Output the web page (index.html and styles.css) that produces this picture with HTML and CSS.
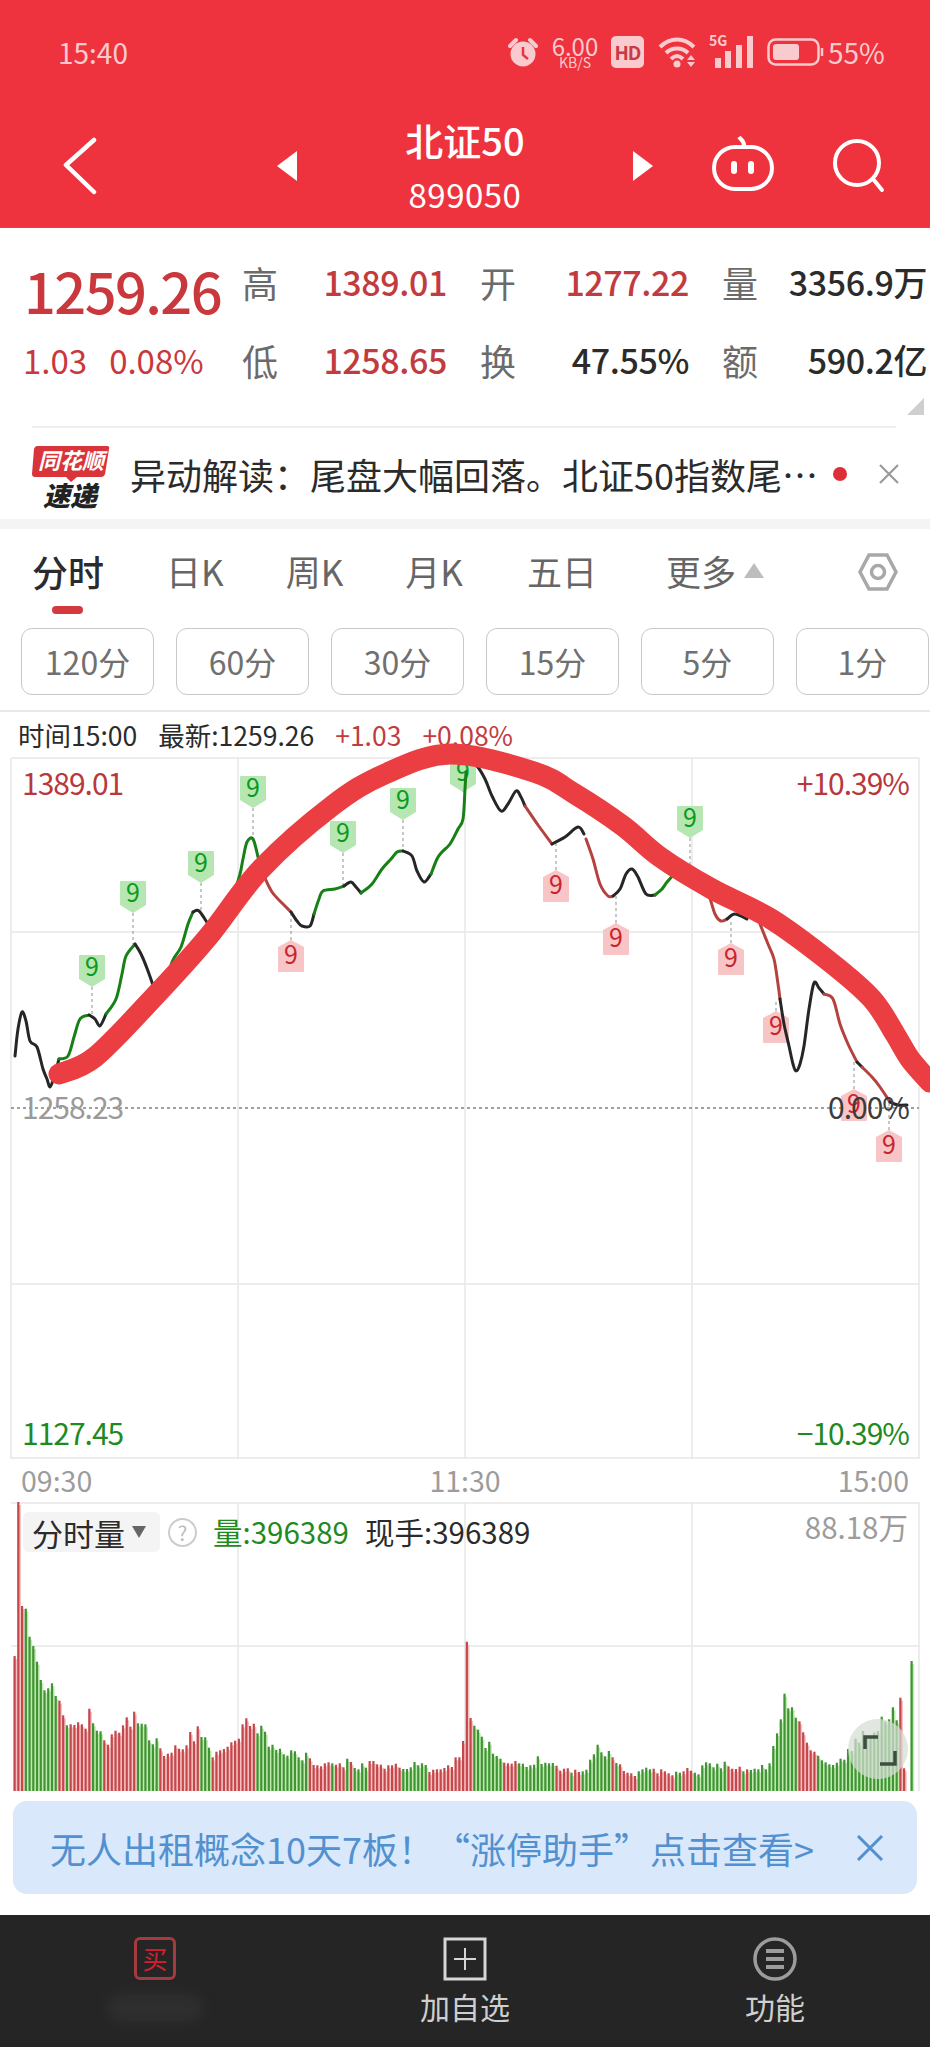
FILE: index.html
```html
<!DOCTYPE html>
<html lang="zh-CN">
<head>
  <meta charset="UTF-8">
  <meta name="viewport" content="width=device-width, initial-scale=1.0">
  <title>北证50</title>
  <link rel="stylesheet" href="styles.css">
</head>
<body>
  <header class="topbar">
    <div class="status">
      <span class="clock">15:40</span>
      <div class="status-icons">
        <svg class="ico-alarm" width="30" height="30" viewBox="0 0 30 30">
          <path d="M2 9 L8 3 M28 9 L22 3" class="alarm-ear"/>
          <circle cx="15" cy="17" r="12.5" class="alarm-face"/>
          <path d="M15 10 V18 L20 22" class="alarm-hand"/>
        </svg>
        <div class="speed"><span class="speed-num">6.00</span><span class="speed-unit">KB/S</span></div>
        <span class="hd">HD</span>
        <svg class="ico-wifi" width="40" height="32" viewBox="0 0 40 32">
          <path d="M2 11 C12 1 26 1 36 11 M8 17 C14 11 24 11 30 17 M13 23 C17 19 21 19 25 23" class="wifi-arc"/>
          <circle cx="19" cy="28" r="3.5" class="wifi-dot"/>
          <path d="M29 24 L33 19 L37 24 Z M29 26 L37 26 L33 31 Z" class="wifi-dot"/>
        </svg>
        <div class="signal">
          <span class="signal-5g">5G</span>
          <svg width="44" height="32" viewBox="0 0 44 32">
            <rect x="6" y="22" width="6" height="10"/>
            <rect x="16" y="15" width="6" height="17"/>
            <rect x="27" y="9" width="6" height="23"/>
            <rect x="38" y="0" width="6" height="32"/>
          </svg>
        </div>
        <svg class="ico-battery" width="57" height="28" viewBox="0 0 57 28">
          <rect x="1.5" y="1.5" width="50" height="25" rx="7" class="batt-shell"/>
          <rect x="6" y="6" width="26" height="16" rx="3" class="batt-fill"/>
          <path d="M55 10 V18" class="batt-shell"/>
        </svg>
        <span class="batt-pct">55%</span>
      </div>
    </div>
    <nav class="nav">
      <svg class="nav-back" width="38" height="58" viewBox="0 0 38 58"><path d="M33 3 L5 28 L33 55"/></svg>
      <span class="tri tri-left"></span>
      <div class="title">
        <div class="title-name">北证50</div>
        <div class="title-code">899050</div>
      </div>
      <span class="tri tri-right"></span>
      <svg class="nav-robot" width="64" height="56" viewBox="0 0 64 56">
        <path d="M28 1 C30 4 34 5 33 11" class="robot-line"/>
        <rect x="3" y="11" width="58" height="42" rx="21" class="robot-line"/>
        <rect x="20" y="25" width="6" height="13" rx="3" class="robot-eye"/>
        <rect x="37" y="25" width="6" height="13" rx="3" class="robot-eye"/>
      </svg>
      <svg class="nav-search" width="54" height="54" viewBox="0 0 54 54">
        <circle cx="25" cy="24" r="22"/>
        <path d="M41 40 L50 51"/>
      </svg>
    </nav>
  </header>

  <section class="quote">
    <div class="price">1259.26</div>
    <div class="cell"><span class="cell-label">高</span><span class="cell-val up">1389.01</span></div>
    <div class="cell"><span class="cell-label">开</span><span class="cell-val up">1277.22</span></div>
    <div class="cell"><span class="cell-label">量</span><span class="cell-val">3356.9万</span></div>
    <div class="change"><span>1.03</span><span>0.08%</span></div>
    <div class="cell"><span class="cell-label">低</span><span class="cell-val up">1258.65</span></div>
    <div class="cell"><span class="cell-label">换</span><span class="cell-val">47.55%</span></div>
    <div class="cell"><span class="cell-label">额</span><span class="cell-val">590.2亿</span></div>
    <span class="corner"></span>
  </section>

  <section class="news">
    <svg class="news-logo" width="78" height="72" viewBox="0 0 78 72">
      <path d="M5 1 H75 Q78 1 77 4 L73 29 Q72 32 69 32 H45 L39 37 L34 32 H3 Q0 32 0 29 L2 4 Q3 1 5 1 Z" class="logo-bubble"/>
      <text x="39" y="24" class="logo-top">同花顺</text>
      <text x="38" y="61" class="logo-bottom">速递</text>
    </svg>
    <div class="news-text">异动解读：尾盘大幅回落。北证50指数尾…</div>
    <span class="news-dot"></span>
    <svg class="news-close" width="22" height="22" viewBox="0 0 22 22"><path d="M2 2 L20 20 M20 2 L2 20"/></svg>
  </section>

  <div class="strip"></div>

  <div class="tabs">
    <span class="tab tab-on">分时</span>
    <span class="tab">日K</span>
    <span class="tab">周K</span>
    <span class="tab">月K</span>
    <span class="tab">五日</span>
    <span class="tab">更多<i class="tab-up"></i></span>
    <svg class="tab-gear" width="42" height="42" viewBox="0 0 42 42">
      <path d="M12 4 H30 L39 21 L30 38 H12 L3 21 Z"/>
      <circle cx="21" cy="21" r="6.5"/>
    </svg>
  </div>

  <div class="periods">
    <span class="period">120分</span>
    <span class="period">60分</span>
    <span class="period">30分</span>
    <span class="period">15分</span>
    <span class="period">5分</span>
    <span class="period">1分</span>
  </div>

  <div class="tick">
    <span>时间15:00</span>
    <span class="tick-gap">最新:1259.26</span>
    <span class="tick-gap up">+1.03</span>
    <span class="tick-gap up">+0.08%</span>
  </div>

  <svg class="chart" width="930" height="701" viewBox="0 759 930 701">
    <g class="grid">
      <path d="M11 759 H919 M11 933 H919 M11 1285 H919 M11 1459 H919"/>
      <path d="M11 759 V1460 M238 759 V1460 M465 759 V1460 M692 759 V1460 M919 759 V1460"/>
    </g>
    <path d="M11 1109 H919" class="base"/>
    <g id="tags"></g>
    <polyline class="ln ln-k" points="15,1057 18,1030 22,1013 26,1022 30,1042 37,1048 43,1070 47,1080 50,1088 54,1078 59,1060"/>
    <polyline class="ln ln-g" points="59,1060 68,1057 74,1038 80,1020 89,1016"/>
    <polyline class="ln ln-k" points="89,1016 95,1020 100,1027 106,1015"/>
    <polyline class="ln ln-g" points="106,1015 116,1000 122,975 126,957 135,945"/>
    <polyline class="ln ln-k" points="135,945 141,955 148,972 155,992"/>
    <polyline class="ln ln-g" points="165,990 172,963 181,948 188,925 193,913"/>
    <polyline class="ln ln-k" points="193,913 199,912 208,925"/>
    <polyline class="ln ln-g" points="225,905 234,893 240,875 243,860 247,843 253,840 258,858"/>
    <polyline class="ln ln-r" points="264,877 272,893 283,905 291,913"/>
    <polyline class="ln ln-k" points="291,913 297,922 302,927 310,927 314,915"/>
    <polyline class="ln ln-g" points="314,915 319,900 323,892 335,890 344,887"/>
    <polyline class="ln ln-k" points="344,887 351,883 356,888 361,894"/>
    <polyline class="ln ln-g" points="361,894 372,885 382,870 391,860 397,853 403,852"/>
    <polyline class="ln ln-k" points="403,852 412,857 417,872 424,883 431,875"/>
    <polyline class="ln ln-g" points="431,875 437,860 442,853 450,845 458,830 463,820 465,790 466,773"/>
    <polyline class="ln ln-k" points="470,762 477,767 485,780 492,797 501,812 508,805 516,792 521,798 525,807"/>
    <polyline class="ln ln-r" points="525,807 538,826 552,845"/>
    <polyline class="ln ln-k" points="552,845 565,838 578,828 584,835"/>
    <polyline class="ln ln-r" points="586,840 593,860 600,885 608,897 613,897"/>
    <polyline class="ln ln-k" points="613,897 620,890 626,875 632,870 638,878 646,895 655,896"/>
    <polyline class="ln ln-g" points="655,896 662,890 667,883 676,873"/>
    <polyline class="ln ln-r" points="691,872 700,882 709,897 715,915 721,922 727,920"/>
    <polyline class="ln ln-k" points="727,920 735,915 747,920"/>
    <polyline class="ln ln-r" points="760,925 768,945 774,960 778,985 780,1000"/>
    <polyline class="ln ln-k" points="780,1000 784,1025 789,1047 793,1065 796,1072 800,1065 804,1047 809,1010 814,984 819,989 824,995"/>
    <polyline class="ln ln-r" points="824,995 833,1000 840,1025 848,1045 857,1063"/>
    <polyline class="ln ln-k" points="857,1063 862,1068"/>
    <polyline class="ln ln-r" points="862,1068 872,1078 880,1088 890,1103"/>
    <polyline class="ln ln-k" points="890,1103 898,1106 907,1106"/>
    <text x="22" y="796" class="lbl lbl-up">1389.01</text>
    <text x="909" y="796" class="lbl lbl-end lbl-up">+10.39%</text>
    <text x="22" y="1120" class="lbl lbl-mid">1258.23</text>
    <text x="909" y="1120" class="lbl lbl-end lbl-dark">0.00%</text>
    <text x="22" y="1446" class="lbl down">1127.45</text>
    <text x="909" y="1446" class="lbl lbl-end down">−10.39%</text>
    <polyline class="marker" points="59,1075 95,1058 154,998 208,938 261,870 332,807 385,775 451,755 534,773 575,795 623,827 660,858 712,890 771,920 830,963 872,1000 895,1035 910,1060 930,1083"/>
  </svg>

  <div class="times">
    <span>09:30</span>
    <span>11:30</span>
    <span>15:00</span>
  </div>

  <div class="vol">
    <svg class="vol-chart" width="930" height="289" viewBox="0 1503 930 289">
      <g class="grid">
        <path d="M11 1504 H919 M11 1647 H919"/>
        <path d="M238 1503 V1792 M465 1503 V1792 M692 1503 V1792 M919 1503 V1792"/>
      </g>
      <g id="bars"></g>
      <circle cx="878" cy="1750" r="30" class="zoom-bg"/>
      <path d="M865 1750 V1738 H878 M880 1765 H895 V1752" class="zoom-ico"/>
    </svg>
    <div class="vol-head">
      <span class="vol-chip">分时量<i class="chip-down"></i></span>
      <span class="vol-help">?</span>
      <span class="vol-num down">量:396389</span>
      <span class="vol-num">现手:396389</span>
      <span class="vol-max">88.18万</span>
    </div>
  </div>

  <div class="banner">
    <span class="banner-text">无人出租概念10天7板！“涨停助手”点击查看&gt;</span>
    <svg class="banner-close" width="28" height="26" viewBox="0 0 28 26"><path d="M2 1 L26 25 M26 1 L2 25"/></svg>
  </div>

  <footer class="bottom">
    <div class="bottom-item">
      <span class="buy-ico">买</span>
      <span class="smudge"></span>
    </div>
    <div class="bottom-item">
      <svg width="44" height="44" viewBox="0 0 44 44" class="add-ico">
        <rect x="2" y="2" width="40" height="40"/>
        <path d="M22 11 V33 M11 22 H33"/>
      </svg>
      <span class="bottom-label">加自选</span>
    </div>
    <div class="bottom-item">
      <svg width="44" height="44" viewBox="0 0 44 44" class="fn-ico">
        <circle cx="22" cy="22" r="20"/>
        <path d="M13 14 H31 M13 22 H31 M13 30 H31"/>
      </svg>
      <span class="bottom-label">功能</span>
    </div>
  </footer>

  <script src="script.js"></script>
</body>
</html>
```

FILE: styles.css
```css
* {
  box-sizing: border-box;
}

body {
  margin: 0;
  width: 930px;
  height: 2048px;
  overflow: hidden;
  background-color: #ffffff;
  color: #2b2b2b;
  font-family: "Noto Sans CJK SC", "Noto Sans", sans-serif;
}

svg {
  display: block;
  flex: none;
}

.up {
  color: #c23b3f;
}

.down {
  color: #1f8a22;
  fill: #1f8a22;
}

/* red header */
.topbar {
  height: 228px;
  background-color: #ee333e;
  border-bottom: 1px solid #c4505c;
}

.status {
  height: 104px;
  display: flex;
  align-items: center;
  padding-left: 58px;
  color: #f9cbce;
}

.clock {
  font-size: 28px;
  line-height: 1;
}

.status-icons {
  display: flex;
  align-items: center;
  margin-left: 380px;
}

.alarm-ear {
  fill: none;
  stroke: #f9cbce;
  stroke-width: 4;
  stroke-linecap: round;
}

.alarm-face {
  fill: #f9cbce;
}

.alarm-hand {
  fill: none;
  stroke: #ee333e;
  stroke-width: 2.5;
}

.speed {
  display: flex;
  flex-direction: column;
  align-items: center;
  width: 50px;
  margin-left: 12px;
}

.speed-num {
  font-size: 24px;
  line-height: 21px;
}

.speed-unit {
  font-size: 14px;
  line-height: 13px;
}

.hd {
  width: 33px;
  height: 32px;
  margin-left: 11px;
  border-radius: 5px;
  background-color: #f9cbce;
  color: #c93a46;
  font-size: 19px;
  font-weight: 700;
  line-height: 32px;
  text-align: center;
  letter-spacing: -1px;
}

.ico-wifi {
  margin-left: 14px;
}

.wifi-arc {
  fill: none;
  stroke: #f9cbce;
  stroke-width: 4;
}

.wifi-dot {
  fill: #f9cbce;
}

.signal {
  position: relative;
  margin-left: 11px;
}

.signal svg {
  fill: #f9cbce;
}

.signal-5g {
  position: absolute;
  left: 0;
  top: -3px;
  font-size: 14px;
  font-weight: 700;
  line-height: 14px;
}

.ico-battery {
  margin-left: 14px;
}

.batt-shell {
  fill: none;
  stroke: #f9cbce;
  stroke-width: 2.5;
}

.batt-fill {
  fill: #f9cbce;
}

.batt-pct {
  margin-left: 4px;
  font-size: 28px;
  line-height: 1;
}

.nav {
  height: 123px;
  display: flex;
  align-items: center;
  padding-left: 61px;
}

.nav-back path {
  fill: none;
  stroke: #ffffff;
  stroke-width: 4.5;
  stroke-linecap: round;
  stroke-linejoin: round;
}

.tri {
  width: 0;
  height: 0;
  border-top: 15px solid transparent;
  border-bottom: 15px solid transparent;
}

.tri-left {
  margin-left: 178px;
  border-right: 20px solid #ffffff;
}

.tri-right {
  border-left: 20px solid #ffffff;
}

.title {
  width: 336px;
  margin-top: -3px;
  color: #ffffff;
  text-align: center;
}

.title-name {
  font-size: 38px;
  font-weight: 500;
  line-height: 44px;
}

.title-code {
  margin-top: 15px;
  font-size: 33px;
  line-height: 34px;
  letter-spacing: 0.5px;
}

.nav-robot {
  margin-left: 58px;
  margin-top: -4px;
}

.robot-line {
  fill: none;
  stroke: #ffffff;
  stroke-width: 4;
}

.robot-eye {
  fill: #ffffff;
}

.nav-search {
  margin-left: 57px;
}

.nav-search circle,
.nav-search path {
  fill: none;
  stroke: #ffffff;
  stroke-width: 4;
  stroke-linecap: round;
}

/* quote table */
.quote {
  position: relative;
  height: 198px;
  padding-top: 26px;
  display: grid;
  grid-template-columns: 209px 204px 208px 204px;
  grid-template-rows: 56px 56px;
  column-gap: 34px;
  row-gap: 22px;
}

.price {
  padding-left: 24px;
  margin-top: 8px;
  color: #c9383c;
  font-size: 56px;
  font-weight: 500;
  line-height: 56px;
  letter-spacing: -1.6px;
  white-space: nowrap;
}

.change {
  display: flex;
  gap: 22px;
  padding-left: 23px;
  color: #c9383c;
  font-size: 33px;
  line-height: 56px;
  white-space: nowrap;
}

.cell {
  display: flex;
  justify-content: space-between;
  margin-left: -1px;
  line-height: 56px;
}

.cell-label {
  color: #6b6b6b;
  font-size: 36px;
}

.cell-val {
  font-size: 34px;
  font-weight: 500;
  letter-spacing: -0.4px;
  white-space: nowrap;
}

.corner {
  position: absolute;
  right: 6px;
  top: 170px;
  width: 0;
  height: 0;
  border-bottom: 17px solid #cfcfcf;
  border-left: 17px solid transparent;
}

/* news row */
.news {
  position: relative;
  height: 93px;
  margin: 0 34px 0 32px;
  border-top: 2px solid #eeeeee;
  display: flex;
  align-items: center;
}

.news-logo {
  margin-top: 14px;
}

.logo-bubble {
  fill: #d8343a;
}

.logo-top {
  fill: #ffffff;
  font-size: 22px;
  font-weight: 700;
  font-style: italic;
  text-anchor: middle;
}

.logo-bottom {
  fill: #222222;
  font-size: 27px;
  font-weight: 900;
  font-style: italic;
  text-anchor: middle;
}

.news-text {
  flex: none;
  width: 690px;
  margin-left: 20px;
  font-size: 36px;
  white-space: nowrap;
}

.news-dot {
  flex: none;
  width: 14px;
  height: 14px;
  margin-left: 13px;
  border-radius: 50%;
  background-color: #dd2f38;
}

.news-close {
  margin-left: 31px;
  margin-right: -4px;
}

.news-close path {
  fill: none;
  stroke: #9a9a9a;
  stroke-width: 2.2;
}

.strip {
  height: 10px;
  background-color: #f4f4f4;
}

/* tabs */
.tabs {
  position: relative;
  height: 99px;
  padding: 0 0 16px 32px;
  display: flex;
  align-items: center;
  gap: 62px;
  color: #666666;
  font-size: 35px;
}

.tab {
  display: flex;
  align-items: center;
  line-height: 1;
  white-space: nowrap;
}

.tab:nth-child(5) {
  margin-left: 2px;
}

.tab:nth-child(6) {
  margin-left: 7px;
}

.tab-on {
  position: relative;
  color: #2b2b2b;
  font-size: 36px;
  font-weight: 500;
}

.tab-on::after {
  content: "";
  position: absolute;
  left: 20px;
  top: 53px;
  width: 31px;
  height: 8px;
  border-radius: 4px;
  background-color: #d23a3e;
}

.tab-up {
  margin-left: 8px;
  width: 0;
  height: 0;
  border-left: 10px solid transparent;
  border-right: 10px solid transparent;
  border-bottom: 15px solid #bdbdbd;
}

.tab-gear {
  position: absolute;
  left: 857px;
  top: 22px;
  fill: none;
  stroke: #a8a8a8;
  stroke-width: 3.5;
}

.periods {
  height: 84px;
  padding: 0 0 17px 21px;
  display: flex;
  gap: 22px;
  overflow: hidden;
  border-bottom: 2px solid #e8e8e8;
}

.period {
  flex: none;
  width: 133px;
  height: 67px;
  border: 1.5px solid #c8c8c8;
  border-radius: 11px;
  color: #707070;
  font-size: 32px;
  line-height: 64px;
  text-align: center;
}

.tick {
  height: 46px;
  padding-left: 18px;
  display: flex;
  align-items: center;
  font-size: 26.5px;
  line-height: 1;
  white-space: nowrap;
}

.tick-gap {
  margin-left: 21px;
}

/* charts */
.chart {
  position: relative;
  overflow: visible;
}

.grid path {
  fill: none;
  stroke: #e8e8e8;
  stroke-width: 1.5;
}

.base {
  fill: none;
  stroke: #a0a0a0;
  stroke-width: 2;
  stroke-dasharray: 3 3;
}

.ln {
  fill: none;
  stroke-width: 3;
  stroke-linejoin: round;
  stroke-linecap: round;
}

.ln-k {
  stroke: #262626;
}

.ln-g {
  stroke: #178017;
}

.ln-r {
  stroke: #b5423f;
}

.lbl {
  font-size: 30px;
  letter-spacing: -1px;
}

.lbl-end {
  text-anchor: end;
}

.lbl-up {
  fill: #b8383c;
}

.lbl-mid {
  fill: #9a9a9a;
}

.lbl-dark {
  fill: #3c3c3c;
}

.marker {
  fill: none;
  stroke: #ea3e42;
  stroke-width: 21;
  stroke-linecap: round;
  stroke-linejoin: round;
}

.tag-g {
  fill: #b6e6b2;
}

.tag-r {
  fill: #f8c5c6;
}

.tag-num {
  font-size: 25px;
  text-anchor: middle;
}

.tag-num-g {
  fill: #0a9a1c;
}

.tag-num-r {
  fill: #c8242f;
}

.tag-line {
  fill: none;
  stroke: #8f8f8f;
  stroke-width: 1;
  stroke-dasharray: 3 3;
}

.times {
  height: 43px;
  padding: 0 21px;
  display: flex;
  align-items: center;
  justify-content: space-between;
  color: #9c9c9c;
  font-size: 28.5px;
  line-height: 1;
}

.vol {
  position: relative;
  height: 289px;
}

.bar-r {
  fill: #c4474b;
}

.bar-g {
  fill: #3f9433;
}

.tint-r {
  fill: #f6c0c0;
}

.tint-g {
  fill: #bfe9ae;
}

.zoom-bg {
  fill: #d5ddd5;
  fill-opacity: 0.72;
}

.zoom-ico {
  fill: none;
  stroke: #3f4c40;
  stroke-width: 3.5;
}

.vol-head {
  position: absolute;
  left: 23px;
  right: 22px;
  top: 10px;
  display: flex;
  align-items: center;
  font-size: 29.5px;
  line-height: 1;
  white-space: nowrap;
}

.vol-chip {
  width: 137px;
  height: 40px;
  padding-left: 9px;
  display: flex;
  align-items: center;
  border-radius: 6px;
  background-color: #f4f4f4;
  font-size: 31px;
}

.chip-down {
  margin-left: 7px;
  width: 0;
  height: 0;
  border-left: 7px solid transparent;
  border-right: 7px solid transparent;
  border-top: 12px solid #666666;
}

.vol-help {
  width: 29px;
  height: 29px;
  margin-left: 8px;
  border: 2px solid #cccccc;
  border-radius: 50%;
  color: #bbbbbb;
  font-size: 20px;
  line-height: 25px;
  text-align: center;
}

.vol-num {
  margin-left: 16px;
}

.vol-max {
  margin-left: auto;
  margin-top: -10px;
  color: #9c9c9c;
}

.banner {
  margin: 10px 13px 0;
  height: 93px;
  padding: 0 33px 0 37px;
  display: flex;
  align-items: center;
  justify-content: space-between;
  border-radius: 14px;
  background-color: #d9e9fb;
  color: #5390cf;
  font-size: 36px;
  white-space: nowrap;
}

.banner-close path {
  fill: none;
  stroke: #5390cf;
  stroke-width: 3;
}

.bottom {
  height: 132px;
  margin-top: 21px;
  display: grid;
  grid-template-columns: 310px 310px 310px;
  background-color: #252525;
  color: #cfcfcf;
}

.bottom-item {
  padding-top: 22px;
  display: flex;
  flex-direction: column;
  align-items: center;
  gap: 3px;
}

.bottom-label {
  font-size: 30px;
  line-height: 44px;
}

.buy-ico {
  width: 42px;
  height: 43px;
  border: 3px solid #a43b3e;
  border-radius: 6px;
  color: #cf2230;
  font-size: 25px;
  line-height: 36px;
  text-align: center;
}

.smudge {
  width: 96px;
  height: 30px;
  margin-top: 10px;
  border-radius: 14px;
  background-color: #2e2e2e;
  filter: blur(6px);
}

.add-ico rect,
.add-ico path {
  fill: none;
  stroke: #d6d6d6;
  stroke-width: 3;
}

.add-ico path {
  stroke-width: 2;
}

.fn-ico circle {
  fill: none;
  stroke: #9c9c9c;
  stroke-width: 3.5;
}

.fn-ico path {
  fill: none;
  stroke: #9c9c9c;
  stroke-width: 4;
}
```

FILE: script.js
```js
const SVG_NS = 'http://www.w3.org/2000/svg';

function make(parent, name, attrs) {
  const el = document.createElementNS(SVG_NS, name);
  for (const key in attrs) el.setAttribute(key, attrs[key]);
  parent.appendChild(el);
  return el;
}

// Turn every chart polyline into a smooth curve through the same points
function smooth(line) {
  const p = line.getAttribute('points').split(' ').map(function (s) {
    return s.split(',').map(Number);
  });
  let d = 'M' + p[0][0] + ' ' + p[0][1];
  for (let i = 0; i < p.length - 1; i++) {
    const a = p[Math.max(i - 1, 0)], b = p[i], c = p[i + 1], e = p[Math.min(i + 2, p.length - 1)];
    d += ' C' + (b[0] + (c[0] - a[0]) / 6).toFixed(1) + ' ' + (b[1] + (c[1] - a[1]) / 6).toFixed(1) +
      ' ' + (c[0] - (e[0] - b[0]) / 6).toFixed(1) + ' ' + (c[1] - (e[1] - b[1]) / 6).toFixed(1) +
      ' ' + c[0] + ' ' + c[1];
  }
  const path = document.createElementNS(SVG_NS, 'path');
  path.setAttribute('class', line.getAttribute('class'));
  path.setAttribute('d', d);
  line.replaceWith(path);
}

document.querySelectorAll('.chart polyline').forEach(smooth);

// The "9" signal tags: x, centre y, y of the price line they point at
const greenTags = [
  [92, 972, 1015], [133, 898, 945], [201, 868, 912], [253, 793, 840],
  [343, 838, 887], [403, 805, 852], [463, 777, 777], [690, 823, 872]
];
const redTags = [
  [291, 957, 913], [556, 887, 845], [616, 940, 893], [731, 960, 920],
  [776, 1028, 1000], [854, 1106, 1063], [889, 1147, 1103]
];

const tags = document.getElementById('tags');

greenTags.forEach(function (t) {
  const x = t[0], y = t[1];
  make(tags, 'path', { class: 'tag-line', d: 'M' + x + ' ' + (y + 16) + ' V' + t[2] });
  make(tags, 'path', {
    class: 'tag-g',
    d: 'M' + (x - 12) + ' ' + (y - 16) + ' h24 q1 0 1 1 v23 l-13 8 l-13 -8 v-23 q0 -1 1 -1 z'
  });
  make(tags, 'text', { class: 'tag-num tag-num-g', x: x, y: y + 5 }).textContent = '9';
});

redTags.forEach(function (t) {
  const x = t[0], y = t[1];
  make(tags, 'path', { class: 'tag-line', d: 'M' + x + ' ' + (y - 16) + ' V' + t[2] });
  make(tags, 'path', {
    class: 'tag-r',
    d: 'M' + x + ' ' + (y - 16) + ' l13 7 v24 q0 1 -1 1 h-24 q-1 0 -1 -1 v-24 z'
  });
  make(tags, 'text', { class: 'tag-num tag-num-r', x: x, y: y + 8 }).textContent = '9';
});

// Volume bars, one per minute: colour letter + top of the bar as read off a 3x crop
const volTops =
  'r290 r0 r140 g148 g232 g260 g307 g362 g393 g387 g372 g410 r424 r468 g498 r495 r497 r489 r495 r508 ' +
  'r448 g492 g514 g516 r543 r556 r525 r514 r520 r498 r474 r502 r457 g492 g493 g495 g543 g555 g537 r567 ' +
  'r590 r583 r580 r558 r568 r570 r558 r518 r546 r501 g533 g534 g565 r594 r577 r573 r569 r562 r549 r544 ' +
  'r538 r495 r477 r500 r493 g522 g499 g517 g562 g556 g572 g568 g585 g589 g573 g576 g594 g603 g580 r597 ' +
  'r617 r618 r621 r612 r609 g612 r616 r612 r624 g598 r608 g626 g630 g612 g625 r605 r605 r615 r616 r628 ' +
  'r618 r618 r613 r625 g629 g629 g624 g608 g618 g612 g617 r638 r631 r630 r630 r626 r618 r623 r594 r594 ' +
  'r545 r247 r476 g499 g511 g532 g566 g547 g583 g590 g598 r610 r612 r613 r605 g612 g613 g623 g618 g616 ' +
  'g591 g614 g610 g612 g611 r619 r634 r628 r627 g640 r631 r638 g636 g631 g601 g585 g556 g579 g591 g575 ' +
  'r594 g611 r615 r635 r640 r642 r650 g636 g630 g625 g630 r628 r642 r630 r636 r642 r648 g637 g640 r636 ' +
  'r626 r634 g640 g645 g618 g609 g612 g624 g613 g627 g607 r621 r628 r629 r622 g636 r630 g632 g628 g630 ' +
  'g617 g630 g612 g560 g522 g480 g403 g447 g444 g475 r486 r519 r550 r573 r577 g589 g603 g609 g615 g617 ' +
  'g610 g598 g601 g569 g575 g538 g550 g515 g530 g530 g520 g515 g472 g487 g480 g444 g483 r415 r627 x0 g305';

const bars = document.getElementById('bars');
const BASE = 1792;

volTops.split(' ').forEach(function (item, i) {
  const kind = item[0];
  if (kind === 'x') return;
  const top = Number(item.slice(1));
  // the crop's baseline sits at 695; r0 is the bar that runs off the top
  const h = top === 0 ? 289 : (695 - top) / 3;
  const x = 13.5 + i * 3.7375;
  make(bars, 'rect', {
    class: 'tint-' + kind,
    x: x.toFixed(2),
    y: (BASE - h + 3).toFixed(1),
    width: 3.7,
    height: (h - 3).toFixed(1)
  });
  make(bars, 'rect', {
    class: 'bar-' + kind,
    x: x.toFixed(2),
    y: (BASE - h).toFixed(1),
    width: 2.2,
    height: h.toFixed(1)
  });
});
```
